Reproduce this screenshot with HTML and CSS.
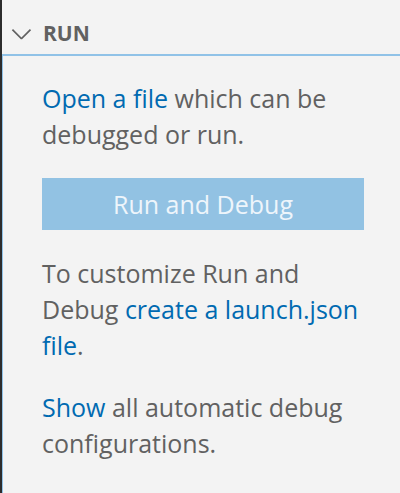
FILE: index.html
```html
<!DOCTYPE html>
<html lang="en">
<head>
<meta charset="utf-8">
<title>Run</title>
<link rel="stylesheet" href="styles.css">
</head>
<body>
<div class="sidebar">
  <div class="pane-header">
    <svg class="chevron" viewBox="0 0 16 16" width="31" height="31" aria-hidden="true">
      <path d="M7.976 10.072l4.357-4.357.62.618L8.284 11h-.618L3 6.333l.619-.618 4.357 4.357z" fill="#616161"/>
    </svg>
    <span class="title">RUN</span>
  </div>
  <div class="pane-body">
    <p class="para"><a class="link" href="#">Open a file</a> which can be debugged or run.</p>
    <button class="btn" type="button">Run and Debug</button>
    <p class="para">To customize Run and Debug <a class="link" href="#">create a launch.json file</a>.</p>
    <p class="para"><a class="link" href="#">Show</a> all automatic debug configurations.</p>
  </div>
</div>
</body>
</html>
```
FILE: styles.css
```css
html, body {
  margin: 0;
  padding: 0;
  height: 100%;
  background: #f3f3f3;
}
body {
  font-family: "Open Sans", "Noto Sans", sans-serif;
  color: #616161;
}
.sidebar {
  box-sizing: border-box;
  height: 100%;
  border-left: 2px solid #2c2c2c;
  display: flex;
  flex-direction: column;
  padding-top: 12px;
}
.pane-header {
  height: 42px;
  display: flex;
  align-items: center;
  padding-left: 4px;
}
.chevron {
  display: block;
  flex: none;
}
.title {
  margin-left: 6px;
  font-size: 21px;
  font-weight: 700;
  color: #616161;
}
.pane-body {
  flex: 1;
  border-top: 2px solid #90c2e7;
  border-left: 1px solid #90c2e7;
  padding: 24px 36px 0 39px;
}
.para {
  margin: 0 0 26px 0;
  font-size: 25px;
  line-height: 36px;
}
.link {
  color: #006ab1;
  text-decoration: none;
}
.btn {
  display: block;
  width: 100%;
  height: 52px;
  margin: 0 0 25px 0;
  border: none;
  background: #92c2e3;
  color: #eef5fb;
  font-family: inherit;
  font-size: 25px;
  padding: 0;
}
```
